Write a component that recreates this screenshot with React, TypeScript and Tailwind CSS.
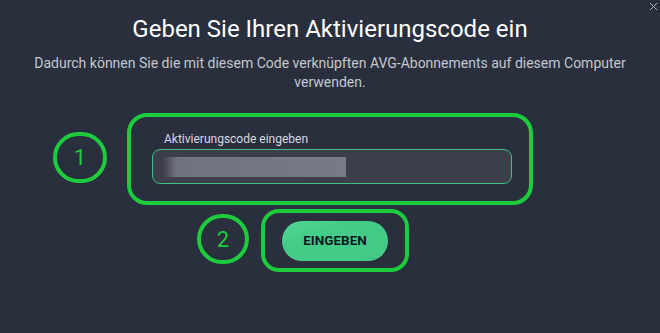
import React from "react";

export default function App() {
  return (
    <div
      className="relative w-[660px] h-[333px] overflow-hidden bg-[#292f3c] text-white flex flex-col items-center"
      style={{ fontFamily: "Roboto, 'Liberation Sans', sans-serif" }}
    >
      <svg className="absolute right-[2px] top-[2px]" width="9" height="9" viewBox="0 0 9 9">
        <path d="M1 1L8 8M8 1L1 8" stroke="#aeb3bd" strokeWidth="1" />
      </svg>
      <h1 className="mt-[14px] text-[24px] leading-[30px] font-normal text-white">
        Geben Sie Ihren Aktivierungscode ein
      </h1>
      <p className="mt-[10px] w-[600px] text-center text-[14px] leading-[19px] text-[#c3c7cf]">
        Dadurch können Sie die mit diesem Code verknüpften AVG-Abonnements auf diesem Computer verwenden.
      </p>
      <div className="mt-[21px] w-[660px] flex flex-col">
        <div className="flex items-start">
          <div className="ml-[53px] mt-[19px] w-[54px] h-[51px] rounded-full border-[4px] border-[#1dcc3c] flex items-center justify-center text-[22px] text-[#1dcc3c]">
            1
          </div>
          <div className="ml-[20px] w-[406px] h-[92px] rounded-[20px] border-[4px] border-[#1dcc3c] pl-[21px] pt-[15px]">
            <div className="ml-[12px] text-[12px] leading-[14px] text-[#d7dae0]">Aktivierungscode eingeben</div>
            <div className="mt-[3px] w-[360px] h-[35px] rounded-[8px] border border-[#3fbf83] bg-[#3a3f4b] flex items-center pl-[9px]">
              <div className="w-[184px] h-[20px] bg-gradient-to-r from-[#3a3f4b] via-[#6f7380] via-[8%] to-[#777b87]" />
            </div>
          </div>
        </div>
        <div className="mt-[4px] flex items-start">
          <div className="ml-[197px] mt-[5px] w-[52px] h-[50px] rounded-full border-[4px] border-[#1dcc3c] flex items-center justify-center text-[22px] text-[#1dcc3c]">
            2
          </div>
          <div className="ml-[12px] w-[148px] h-[63px] rounded-[18px] border-[4px] border-[#1dcc3c] flex items-center justify-center">
            <button className="w-[106px] h-[40px] rounded-full bg-gradient-to-br from-[#52d494] via-[#45cc88] via-[35%] to-[#43c986] text-[13.5px] font-bold text-[#121720]">
              EINGEBEN
            </button>
          </div>
        </div>
      </div>
    </div>
  );
}
